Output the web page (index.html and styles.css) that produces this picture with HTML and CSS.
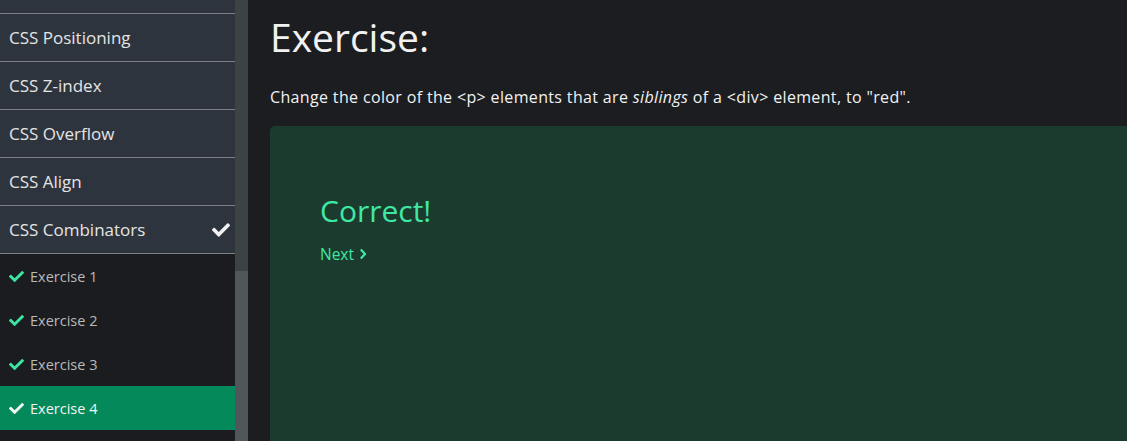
FILE: index.html
```html
<!DOCTYPE html>
<html lang="en">
<head>
<meta charset="utf-8">
<title>Exercise</title>
<link rel="stylesheet" href="styles.css">
</head>
<body>
<div class="page">
  <nav class="sidebar">
    <div class="chapter chapter-cut"></div>
    <div class="chapter">CSS Positioning</div>
    <div class="chapter">CSS Z-index</div>
    <div class="chapter">CSS Overflow</div>
    <div class="chapter">CSS Align</div>
    <div class="chapter">CSS Combinators
      <svg class="tick tick-big" viewBox="0 0 512 512"><path d="M173.9 439.4l-166.4-166.4c-10-10-10-26.2 0-36.2l36.2-36.2c10-10 26.2-10 36.2 0L192 312.7 432.1 72.6c10-10 26.2-10 36.2 0l36.2 36.2c10 10 10 26.2 0 36.2l-294.4 294.4c-10 10-26.2 10-36.2 0z"/></svg>
    </div>
    <div class="exercise"><svg class="tick" viewBox="0 0 512 512"><path d="M173.9 439.4l-166.4-166.4c-10-10-10-26.2 0-36.2l36.2-36.2c10-10 26.2-10 36.2 0L192 312.7 432.1 72.6c10-10 26.2-10 36.2 0l36.2 36.2c10 10 10 26.2 0 36.2l-294.4 294.4c-10 10-26.2 10-36.2 0z"/></svg>Exercise 1</div>
    <div class="exercise"><svg class="tick" viewBox="0 0 512 512"><path d="M173.9 439.4l-166.4-166.4c-10-10-10-26.2 0-36.2l36.2-36.2c10-10 26.2-10 36.2 0L192 312.7 432.1 72.6c10-10 26.2-10 36.2 0l36.2 36.2c10 10 10 26.2 0 36.2l-294.4 294.4c-10 10-26.2 10-36.2 0z"/></svg>Exercise 2</div>
    <div class="exercise"><svg class="tick" viewBox="0 0 512 512"><path d="M173.9 439.4l-166.4-166.4c-10-10-10-26.2 0-36.2l36.2-36.2c10-10 26.2-10 36.2 0L192 312.7 432.1 72.6c10-10 26.2-10 36.2 0l36.2 36.2c10 10 10 26.2 0 36.2l-294.4 294.4c-10 10-26.2 10-36.2 0z"/></svg>Exercise 3</div>
    <div class="exercise active"><svg class="tick" viewBox="0 0 512 512"><path d="M173.9 439.4l-166.4-166.4c-10-10-10-26.2 0-36.2l36.2-36.2c10-10 26.2-10 36.2 0L192 312.7 432.1 72.6c10-10 26.2-10 36.2 0l36.2 36.2c10 10 10 26.2 0 36.2l-294.4 294.4c-10 10-26.2 10-36.2 0z"/></svg>Exercise 4</div>
  </nav>
  <div class="scrollbar"><div class="thumb"></div></div>
  <main class="main">
    <h1 class="title">Exercise:</h1>
    <p class="task">Change the color of the &lt;p&gt; elements that are <em>siblings</em> of a &lt;div&gt; element, to "red".</p>
    <section class="result">
      <h2 class="correct">Correct!</h2>
      <a class="next" href="#">Next <svg class="chev" viewBox="0 0 8 12"><path d="M1.8 1.5 L6 6 L1.8 10.5"/></svg></a>
    </section>
  </main>
</div>
</body>
</html>
```

FILE: styles.css
```css
html, body {
  margin: 0;
  padding: 0;
  height: 100%;
  background: #1c1d20;
  overflow: hidden;
}
body {
  font-family: "Open Sans", "Noto Sans", sans-serif;
}
.page {
  display: flex;
  height: 441px;
  overflow: hidden;
}
.sidebar {
  width: 235px;
  flex: none;
  background: #1b1c1f;
  display: flex;
  flex-direction: column;
}
.chapter {
  height: 47px;
  flex: none;
  border-bottom: 1px solid #7d7f82;
  background: #2e343d;
  color: #e4e4e4;
  font-size: 17px;
  padding: 0 9px;
  display: flex;
  align-items: center;
  justify-content: space-between;
}
.chapter-cut {
  height: 13px;
}
.tick {
  width: 15px;
  height: 15px;
  fill: #3be6a3;
  flex: none;
  margin-right: 6px;
}
.tick-big {
  width: 18px;
  height: 18px;
  fill: #f2f2f2;
  margin-right: -4px;
}
.exercise {
  height: 44px;
  flex: none;
  display: flex;
  align-items: center;
  padding-left: 9px;
  color: #b9b9b9;
  font-size: 14.5px;
}
.exercise.active {
  background: #04895b;
  color: #f4f4f4;
}
.exercise.active .tick {
  fill: #f4f4f4;
}
.scrollbar {
  width: 13px;
  flex: none;
  background: #3d4245;
  display: flex;
  flex-direction: column;
  justify-content: flex-end;
}
.thumb {
  height: 170px;
  background: #51565b;
}
.main {
  flex: 1;
  padding-left: 22px;
  color: #f1f1f1;
  min-width: 0;
}
.title {
  margin: 10px 0 0;
  font-size: 39px;
  font-weight: 400;
  line-height: 54px;
}
.task {
  margin: 19px 0 0;
  font-size: 16px;
  letter-spacing: 0.35px;
  line-height: 28px;
}
.task em {
  font-style: italic;
}
.result {
  margin-top: 15px;
  background: #1b3b2e;
  border-radius: 5px 0 0 0;
  height: 315px;
  box-sizing: border-box;
  padding: 65px 50px;
}
.correct {
  margin: 0;
  font-size: 30px;
  font-weight: 400;
  color: #3fe8a3;
  line-height: 40px;
}
.next {
  display: inline-flex;
  align-items: center;
  gap: 5px;
  margin-top: 12px;
  color: #3fe8a3;
  text-decoration: none;
  font-size: 15.5px;
}
.chev {
  width: 8px;
  height: 12px;
  fill: none;
  stroke: #3fe8a3;
  stroke-width: 2.2;
}
```
